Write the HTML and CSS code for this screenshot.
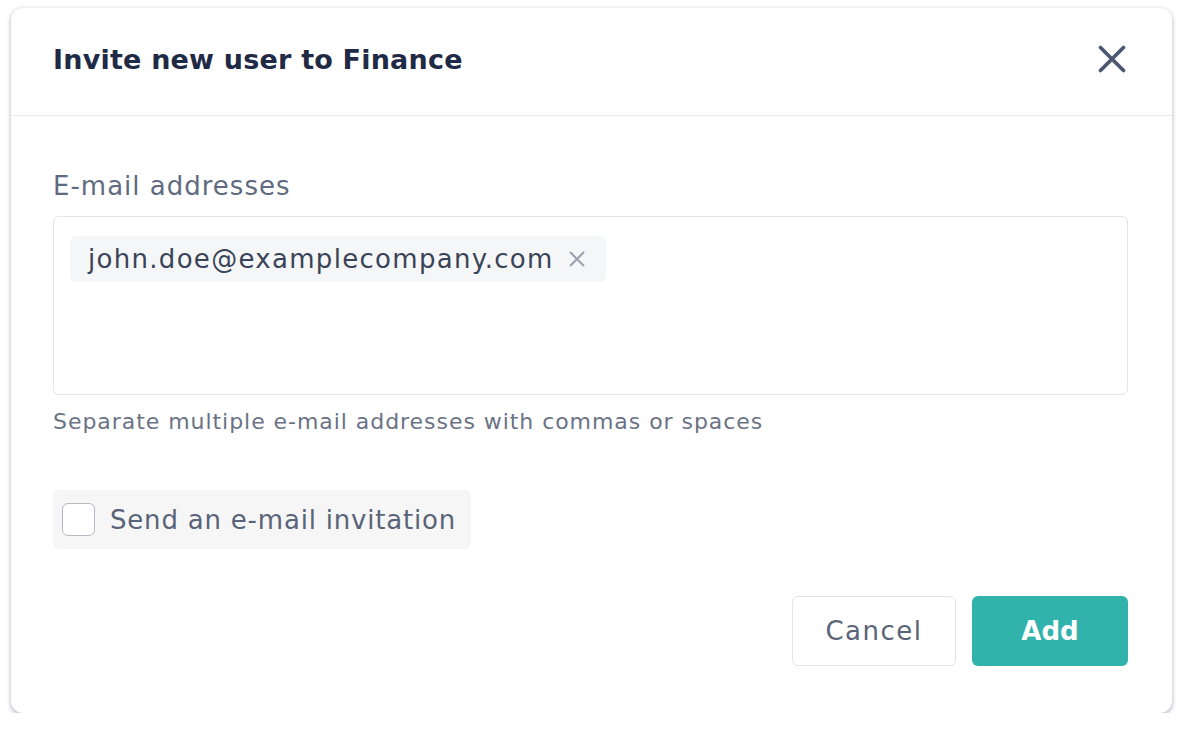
FILE: index.html
```html
<!DOCTYPE html>
<html lang="en">
<head>
<meta charset="utf-8">
<title>Invite new user</title>
<link rel="stylesheet" href="styles.css">
</head>
<body>
<div class="modal">
  <div class="modal-header">
    <h1 class="title">Invite new user to Finance</h1>
    <button class="close" aria-label="Close">
      <svg width="30" height="30" viewBox="0 0 30 30" fill="none" stroke="currentColor" stroke-width="3.8" stroke-linecap="round"><path d="M3.5 3.5L26.5 26.5M26.5 3.5L3.5 26.5"/></svg>
    </button>
  </div>
  <div class="modal-body">
    <label class="label">E-mail addresses</label>
    <div class="emails">
      <span class="chip">john.doe@examplecompany.com
        <svg class="chip-x" width="22" height="22" viewBox="0 0 24 24" fill="none" stroke="currentColor" stroke-width="2.2" stroke-linecap="round"><path d="M5 5L19 19M19 5L5 19"/></svg>
      </span>
    </div>
    <p class="help">Separate multiple e-mail addresses with commas or spaces</p>
    <label class="check-row"><span class="box"></span><span class="check-text">Send an e-mail invitation</span></label>
    <div class="actions">
      <button class="btn btn-cancel">Cancel</button>
      <button class="btn btn-add">Add</button>
    </div>
  </div>
</div>
</body>
</html>
```

FILE: styles.css
```css
* { box-sizing: border-box; }
html, body { margin: 0; padding: 0; background: #ffffff; }
body {
  font-family: "DejaVu Sans", "Noto Sans", sans-serif;
  padding: 8px 11px 0 11px;
}
.modal {
  width: 1161px;
  height: 705px;
  background: #fff;
  border-radius: 12px;
  box-shadow: 0 2px 4px rgba(60, 70, 100, 0.35), 0 0 6px rgba(0,0,0,0.08);
  display: flex;
  flex-direction: column;
}
.modal-header {
  height: 108px;
  border-bottom: 1px solid #e8e9ec;
  display: flex;
  align-items: center;
  justify-content: space-between;
  padding: 0 45px 0 42px;
}
.title {
  margin: 0;
  font-size: 27px;
  font-weight: 600;
  color: #1f2b46;
  letter-spacing: 0.2px;
  line-height: 36px;
  padding-bottom: 4px;
}
.close {
  background: none;
  border: none;
  padding: 0;
  margin-bottom: 6px;
  color: #4b5870;
  display: flex;
  cursor: pointer;
}
.modal-body {
  padding: 54px 44px 0 42px;
  display: flex;
  flex-direction: column;
}
.label {
  font-size: 26px;
  color: #5f6b80;
  line-height: 32px;
  margin-bottom: 14px;
  letter-spacing: 1px;
}
.emails {
  height: 179px;
  border: 1px solid #e2e4e9;
  border-radius: 6px;
  padding: 19px 16px;
  display: flex;
  align-items: flex-start;
}
.chip {
  display: inline-flex;
  align-items: center;
  height: 46px;
  padding: 0 18px 0 18px;
  background: #f5f6f7;
  border-radius: 6px;
  font-size: 26px;
  color: #3a4458;
  gap: 12px;
  letter-spacing: 1.3px;
}
.chip-x { color: #9aa1ae; }
.help {
  margin: 12px 0 0 0;
  font-size: 22px;
  color: #6a7385;
  line-height: 30px;
  letter-spacing: 0.95px;
}
.check-row {
  margin-top: 53px;
  align-self: flex-start;
  display: flex;
  align-items: center;
  height: 59px;
  width: 418px;
  padding-left: 9px;
  background: #f6f6f7;
  border-radius: 6px;
}
.box {
  width: 33px;
  height: 33px;
  border: 1.5px solid #b4b9c4;
  border-radius: 6px;
  background: #fff;
}
.check-text {
  margin-left: 15px;
  font-size: 26px;
  color: #5a6478;
  letter-spacing: 0.8px;
}
.actions {
  margin-top: 47px;
  display: flex;
  justify-content: flex-end;
  gap: 16px;
}
.btn {
  height: 70px;
  border-radius: 6px;
  font-family: inherit;
  font-size: 26px;
  cursor: pointer;
  padding: 0;
}
.btn-cancel {
  width: 164px;
  background: #fff;
  border: 1px solid #e2e4e9;
  color: #5a6478;
  font-weight: 500;
  letter-spacing: 1.5px;
}
.btn-add {
  width: 156px;
  background: #31b3ac;
  border: none;
  color: #fff;
  font-weight: 600;
}
```
